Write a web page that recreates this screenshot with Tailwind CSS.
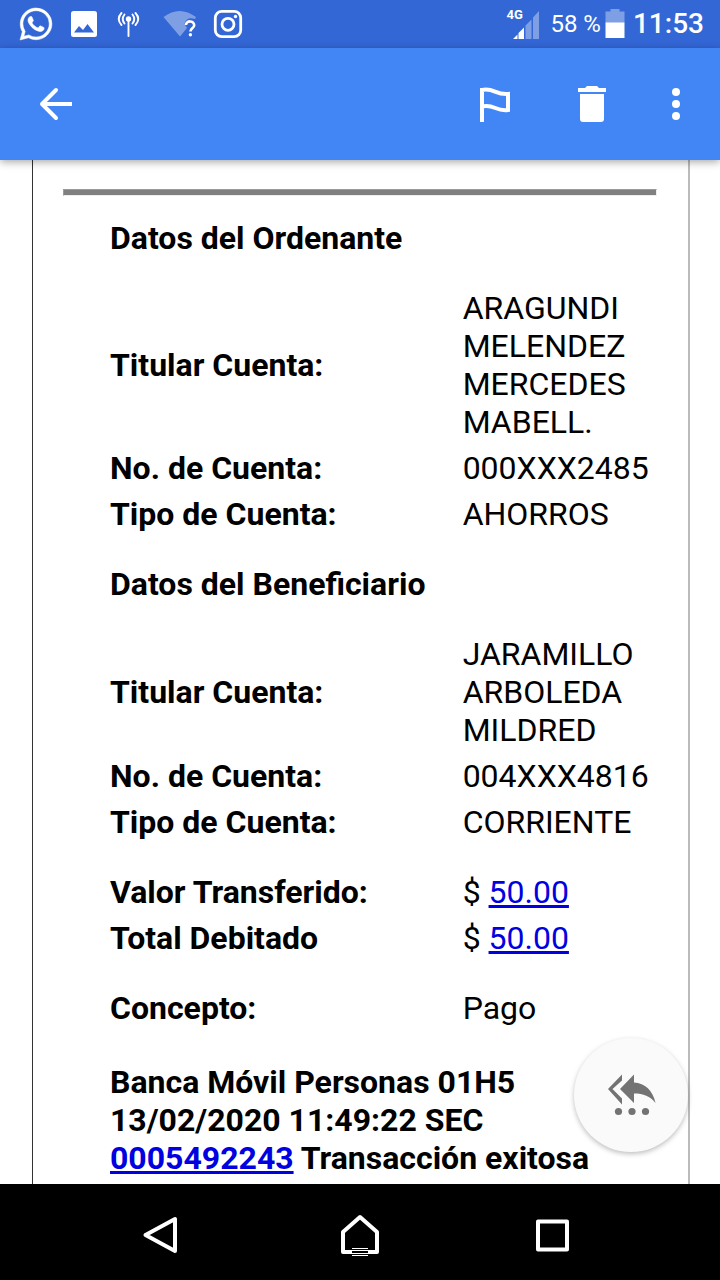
<!DOCTYPE html>
<html lang="es">
<head>
<meta charset="utf-8">
<meta name="viewport" content="width=device-width, initial-scale=1">
<title>Datos de la transferencia</title>
<script src="https://cdn.jsdelivr.net/npm/@tailwindcss/browser@4"></script>
</head>
<body class="flex h-screen flex-col overflow-hidden bg-white font-[Roboto,sans-serif] text-black">
  <!-- Status bar -->
  <div class="flex h-12 shrink-0 items-center justify-between bg-[#3367d6] pr-4 pl-3 text-white">
    <div class="flex">
      <svg class="size-12" viewBox="0 0 48 48" fill="#fff" stroke="#fff" stroke-width=".4" aria-label="WhatsApp">
        <path transform="translate(8 8) scale(1.333)" d="M17.472 14.382c-.297-.149-1.758-.867-2.03-.967-.273-.099-.471-.148-.67.15-.197.297-.767.966-.94 1.164-.173.199-.347.223-.644.075-.297-.15-1.255-.463-2.39-1.475-.883-.788-1.48-1.761-1.653-2.059-.173-.297-.018-.458.13-.606.134-.133.298-.347.446-.52.149-.174.198-.298.298-.497.099-.198.05-.371-.025-.52-.075-.149-.669-1.612-.916-2.207-.242-.579-.487-.5-.669-.51-.173-.008-.371-.01-.57-.01-.198 0-.52.074-.792.372-.272.297-1.04 1.016-1.04 2.479 0 1.462 1.065 2.875 1.213 3.074.149.198 2.096 3.2 5.077 4.487.709.306 1.262.489 1.694.625.712.227 1.36.195 1.871.118.571-.085 1.758-.719 2.006-1.413.248-.694.248-1.289.173-1.413-.074-.124-.272-.198-.57-.347m-5.421 7.403h-.004a9.87 9.87 0 01-5.031-1.378l-.361-.214-3.741.982.998-3.648-.235-.374a9.86 9.86 0 01-1.51-5.26c.001-5.45 4.436-9.884 9.888-9.884 2.64 0 5.122 1.03 6.988 2.898a9.825 9.825 0 012.893 6.994c-.003 5.45-4.437 9.884-9.885 9.884m8.413-18.297A11.815 11.815 0 0012.05 0C5.495 0 .16 5.335.157 11.892c0 2.096.547 4.142 1.588 5.945L.057 24l6.305-1.654a11.882 11.882 0 005.683 1.448h.005c6.554 0 11.89-5.335 11.893-11.893a11.821 11.821 0 00-3.48-8.413z"/>
      </svg>
      <svg class="size-12" viewBox="0 0 48 48" aria-label="Imagen">
        <rect x="11" y="11" width="26" height="26" rx="2.5" fill="#fff"/>
        <path d="M14 32.500l5-6.500 4 4 4.500-6 6.500 8.500z" fill="#3367d6"/>
      </svg>
      <svg class="size-12" viewBox="0 0 48 48" fill="none" stroke="#fff" stroke-width="1.900" stroke-linecap="round" aria-label="Antena">
        <circle cx="20.500" cy="19" r="2.700" fill="#fff" stroke="none"/>
        <path d="M20.500 20v16M16.500 14.500q-3.500 4.500 0 9M24.500 14.500q3.500 4.500 0 9M13.500 13q-5.500 6 0 12M27.500 13q5.500 6 0 12"/>
      </svg>
      <svg class="size-12" viewBox="0 0 48 48" aria-label="Wifi desconocido">
        <path d="M7.500 17Q23.500 5 40 17l-1 2q-8.500-3-10.500 5l2.500 4-7 8.500z" fill="#7f9fe5"/>
        <path d="M30 25c0-4.800 8.200-4.800 8.200 .2 0 3-3.800 3.300-3.800 6.300" fill="none" stroke="#fff" stroke-width="2.600"/>
        <circle cx="34.400" cy="34.800" r="1.700" fill="#fff"/>
      </svg>
      <svg class="size-12" viewBox="0 0 48 48" fill="none" stroke="#fff" stroke-width="2.800" aria-label="Instagram">
        <rect x="11.300" y="11.300" width="25.400" height="25.400" rx="6.500"/>
        <circle cx="24" cy="24.300" r="6"/>
        <circle cx="31.500" cy="16.500" r="1.700" fill="#fff" stroke="none"/>
      </svg>
    </div>
    <div class="flex items-center">
      <div class="relative h-12 w-9">
        <svg class="h-12 w-9" viewBox="0 0 36 48" aria-label="Señal">
          <path d="M7 39l4.500-4.500V39zM12.500 39v-6l5.500-5.500V39z" fill="#fff"/>
          <path d="M19.500 39V25.500l6-6V39zM27 39V17.500l6-6.500v28z" fill="#7f9fe5"/>
        </svg>
        <span class="absolute top-2 left-0 text-[13px] leading-[13px] font-bold">4G</span>
      </div>
      <span class="ml-2 text-2xl leading-[50px]">58 %</span>
      <svg class="ml-1 h-12 w-5" viewBox="0 0 20 48" aria-label="Batería">
        <path d="M.500 11.500h5V9h9v2.500h5V23H.500z" fill="#7f9fe5"/>
        <path d="M.500 22.500h19V38H.500z" fill="#fff"/>
      </svg>
      <span class="ml-2 text-[28px] leading-[50px] font-medium">11:53</span>
    </div>
  </div>

  <!-- Toolbar -->
  <header class="relative z-10 flex h-28 shrink-0 items-center bg-[#4285f4] pr-5 pl-8 shadow-[0_2px_8px_rgba(0,0,0,0.35)]">
    <button type="button" aria-label="Volver" class="size-12">
      <svg class="size-12" viewBox="0 0 48 48" fill="none" stroke="#fff" stroke-width="4">
        <path d="M40 24H11"/><path d="M24 10L10 24l14 14" stroke-linecap="round" stroke-linejoin="round"/>
      </svg>
    </button>
    <button type="button" aria-label="Marcar" class="ml-auto size-12">
      <svg class="size-12" viewBox="0 0 48 48" fill="none" stroke="#fff" stroke-width="4">
        <path d="M10 42V8M10 10c12-2.500 13 5 26 4v16c-13 1.500-13-6-26-3.500"/>
      </svg>
    </button>
    <button type="button" aria-label="Eliminar" class="ml-12 size-12">
      <svg class="size-12" viewBox="0 0 48 48" fill="#fff">
        <path d="M10 8h7l2-2h10l2 2h7v4H10zM12 14h24v25a3 3 0 0 1-3 3H15a3 3 0 0 1-3-3z"/>
      </svg>
    </button>
    <button type="button" aria-label="Más opciones" class="ml-9 size-12">
      <svg class="size-12" viewBox="0 0 48 48" fill="#fff">
        <circle cx="24" cy="12" r="4"/><circle cx="24" cy="24" r="4"/><circle cx="24" cy="36" r="4"/>
      </svg>
    </button>
  </header>

  <!-- Message -->
  <main class="relative flex min-h-0 flex-1 flex-col pr-[30px] pl-8">
    <div class="min-h-0 flex-1 overflow-hidden border-r-2 border-l border-r-[#bbb] border-l-[#333] pr-[31px] pl-[30px]">
      <hr class="mt-[29px] h-[7px] border border-t-[#9a9a9a] border-r-[#eee] border-b-[#eee] border-l-[#9a9a9a] bg-[#808080]">
      <div class="mt-[19px] pl-[43px]">
        <table class="w-full table-fixed text-left text-[32px] leading-[38px]">
          <colgroup><col class="w-[64%]"><col></colgroup>
          <tbody>
            <tr><th colspan="2" class="p-1">Datos del Ordenante</th></tr>
            <tr><th class="p-1 pt-7">Titular Cuenta:</th><td class="p-1 pt-7">ARAGUNDI MELENDEZ MERCEDES MABELL.</td></tr>
            <tr><th class="p-1">No. de Cuenta:</th><td class="p-1">000XXX2485</td></tr>
            <tr><th class="p-1">Tipo de Cuenta:</th><td class="p-1">AHORROS</td></tr>
          </tbody>
          <tbody>
            <tr><th colspan="2" class="p-1 pt-7">Datos del Beneficiario</th></tr>
            <tr><th class="p-1 pt-7">Titular Cuenta:</th><td class="p-1 pt-7">JARAMILLO ARBOLEDA MILDRED</td></tr>
            <tr><th class="p-1">No. de Cuenta:</th><td class="p-1">004XXX4816</td></tr>
            <tr><th class="p-1">Tipo de Cuenta:</th><td class="p-1">CORRIENTE</td></tr>
          </tbody>
          <tbody>
            <tr><th class="p-1 pt-7">Valor Transferido:</th><td class="p-1 pt-7">$ <a href="#" class="text-[#0000e0] underline">50.00</a></td></tr>
            <tr><th class="p-1">Total Debitado</th><td class="p-1">$ <a href="#" class="text-[#0000e0] underline">50.00</a></td></tr>
            <tr><th class="p-1 pt-7">Concepto:</th><td class="p-1 pt-7">Pago</td></tr>
            <tr><td colspan="2" class="p-1 pt-8 font-bold">Banca Móvil Personas 01H5 13/02/2020 11:49:22 SEC <a href="#" class="text-[#0000e0] underline">0005492243</a> Transacción exitosa</td></tr>
          </tbody>
        </table>
      </div>
    </div>
    <button type="button" aria-label="Responder" class="absolute right-8 bottom-8 size-[114px] rounded-full bg-[#fafafa] shadow-[0_2px_5px_rgba(0,0,0,0.25)]">
      <svg class="size-full" viewBox="0 0 114 114" fill="#737373">
        <path d="M48 36.500v6L38.500 51l9.500 9.500v6L34 51z"/>
        <path d="M60 36.500v8c11 .8 19 8 21.500 20.500C76 58 69.500 55.500 60 55.500v9.500L46 51z"/>
        <circle cx="44.500" cy="73.500" r="3.600"/><circle cx="58" cy="73.500" r="3.600"/><circle cx="71.500" cy="73.500" r="3.600"/>
      </svg>
    </button>
  </main>

  <!-- System navigation -->
  <nav class="flex h-24 shrink-0 items-center justify-center gap-36 bg-black pt-2">
    <button type="button" aria-label="Atrás" class="size-12">
      <svg class="size-12 overflow-visible" viewBox="0 0 48 48" fill="none" stroke="#fff" stroke-width="4" stroke-linejoin="round">
        <path d="M31 7v32L1.500 23z"/>
      </svg>
    </button>
    <button type="button" aria-label="Inicio" class="size-12">
      <svg class="size-12" viewBox="0 0 48 48" fill="none" stroke="#fff" stroke-width="4" stroke-linejoin="round">
        <path d="M24 5L41 20v20H7V20z"/>
        <path d="M16 36h16v8H16z" fill="#000" stroke="none"/>
        <path d="M16 36.500h16M16 38.500h16M16 41.500h16M16 43.500h16" stroke-width="1"/>
      </svg>
    </button>
    <button type="button" aria-label="Recientes" class="size-12">
      <svg class="size-12" viewBox="0 0 48 48" fill="none" stroke="#fff" stroke-width="4" stroke-linejoin="round">
        <path d="M10 9.500h29v28H10z"/>
      </svg>
    </button>
  </nav>
</body>
</html>
